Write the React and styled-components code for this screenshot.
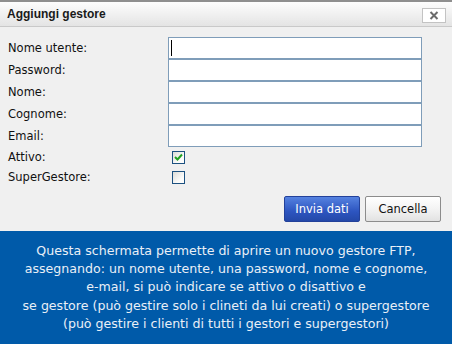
import React, { useState } from 'react';
import styled, { createGlobalStyle } from 'styled-components';

const GlobalStyle = createGlobalStyle`
  html, body {
    margin: 0;
    padding: 0;
    background: #f0f0f0;
  }
  * {
    box-sizing: border-box;
  }
`;

const Dialog = styled.div`
  width: 452px;
  height: 344px;
  display: flex;
  flex-direction: column;
  background: #f0f0f0;
  font-family: 'DejaVu Sans', Tahoma, sans-serif;
  overflow: hidden;
`;

const TitleBar = styled.div`
  height: 27px;
  display: flex;
  align-items: center;
  justify-content: space-between;
  padding: 0 6px 0 7px;
  border-top: 2px solid #8f8f8f;
  border-bottom: 1px solid #c9c9c9;
  background: linear-gradient(#fdfdfd, #e4e4e4);
`;

const Title = styled.div`
  font-family: 'Liberation Sans', Arial, sans-serif;
  font-weight: bold;
  font-size: 12px;
  color: #1a1a1a;
`;

const CloseButton = styled.button`
  width: 24px;
  height: 15px;
  margin-top: 3px;
  padding: 0;
  display: flex;
  align-items: center;
  justify-content: center;
  background: #fff;
  border: 1px solid #c3c3c3;
  cursor: pointer;
`;

const Form = styled.div`
  display: grid;
  grid-template-columns: 160px 254px;
  padding: 10px 0 0 8px;
`;

const Label = styled.label`
  height: ${props => (props.check ? '20px' : '22px')};
  display: flex;
  align-items: center;
  font-size: 11.5px;
  color: #111;
`;

const Field = styled.div`
  position: relative;
  height: 22px;
`;

const Input = styled.input`
  height: 22px;
  width: 254px;
  margin: 0;
  padding: 0 3px;
  border: 1px solid #7f9db9;
  background: #fff;
  font-size: 12px;
  outline: none;
  caret-color: transparent;
`;

const Caret = styled.span`
  position: absolute;
  left: 3px;
  top: 3px;
  width: 1px;
  height: 16px;
  background: #000;
  pointer-events: none;
`;

const CheckCell = styled.div`
  height: 20px;
  display: flex;
  align-items: center;
  padding-left: 4px;
`;

const CheckBox = styled.span`
  width: 13px;
  height: 13px;
  display: flex;
  align-items: center;
  justify-content: center;
  border: 1px solid #1c5180;
  background: linear-gradient(135deg, #dcdcd7, #fcfcfb 70%);
  cursor: pointer;
`;

const Actions = styled.div`
  display: flex;
  justify-content: flex-end;
  gap: 5px;
  padding: 9px 11px 0 0;
`;

const Button = styled.button`
  width: 76px;
  height: 26px;
  border-radius: 2px;
  font-family: 'DejaVu Sans', Tahoma, sans-serif;
  font-size: 11.5px;
  cursor: pointer;
  color: ${props => (props.primary ? '#fff' : '#111')};
  border: 1px solid ${props => (props.primary ? '#23419a' : '#8c8c8c')};
  background: ${props =>
    props.primary
      ? 'linear-gradient(#5582e0, #2d55c0 60%, #2448a8)'
      : 'linear-gradient(#ffffff, #f3f3f3 50%, #e2e2e2)'};
`;

const InfoPanel = styled.div`
  margin-top: 9px;
  flex: 1;
  background: #005aa9;
  color: #e9eff7;
  font-family: 'DejaVu Sans', sans-serif;
  font-size: 12.6px;
  line-height: 18.2px;
  text-align: center;
  padding-top: 11px;
  white-space: nowrap;
`;

function Check({ checked, onClick }) {
  return (
    <CheckBox onClick={onClick}>
      {checked && (
        <svg width="9" height="8" viewBox="0 0 9 8">
          <path d="M1 4 L3.5 6.5 L8 1.5" fill="none" stroke="#21a121" strokeWidth="2" />
        </svg>
      )}
    </CheckBox>
  );
}

export default function App() {
  const [attivo, setAttivo] = useState(true);
  const [sup, setSup] = useState(false);
  const fields = ['Nome utente:', 'Password:', 'Nome:', 'Cognome:', 'Email:'];

  return (
    <>
      <GlobalStyle />
      <Dialog>
        <TitleBar>
          <Title>Aggiungi gestore</Title>
          <CloseButton>
            <svg width="10" height="9" viewBox="0 0 10 9">
              <path d="M1.5 1 L8.5 8 M8.5 1 L1.5 8" stroke="#6b6b6b" strokeWidth="2" />
            </svg>
          </CloseButton>
        </TitleBar>
        <Form>
          {fields.map((f, i) => (
            <React.Fragment key={f}>
              <Label>{f}</Label>
              <Field>
                <Input type={i === 1 ? 'password' : 'text'} />
                {i === 0 && <Caret />}
              </Field>
            </React.Fragment>
          ))}
          <Label check>Attivo:</Label>
          <CheckCell>
            <Check checked={attivo} onClick={() => setAttivo(!attivo)} />
          </CheckCell>
          <Label check>SuperGestore:</Label>
          <CheckCell>
            <Check checked={sup} onClick={() => setSup(!sup)} />
          </CheckCell>
        </Form>
        <Actions>
          <Button primary>Invia dati</Button>
          <Button>Cancella</Button>
        </Actions>
        <InfoPanel>
          Questa schermata permette di aprire un nuovo gestore FTP,
          <br />
          assegnando: un nome utente, una password, nome e cognome,
          <br />
          e-mail, si può indicare se attivo o disattivo e
          <br />
          se gestore (può gestire solo i clineti da lui creati) o supergestore
          <br />
          (può gestire i clienti di tutti i gestori e supergestori)
        </InfoPanel>
      </Dialog>
    </>
  );
}
